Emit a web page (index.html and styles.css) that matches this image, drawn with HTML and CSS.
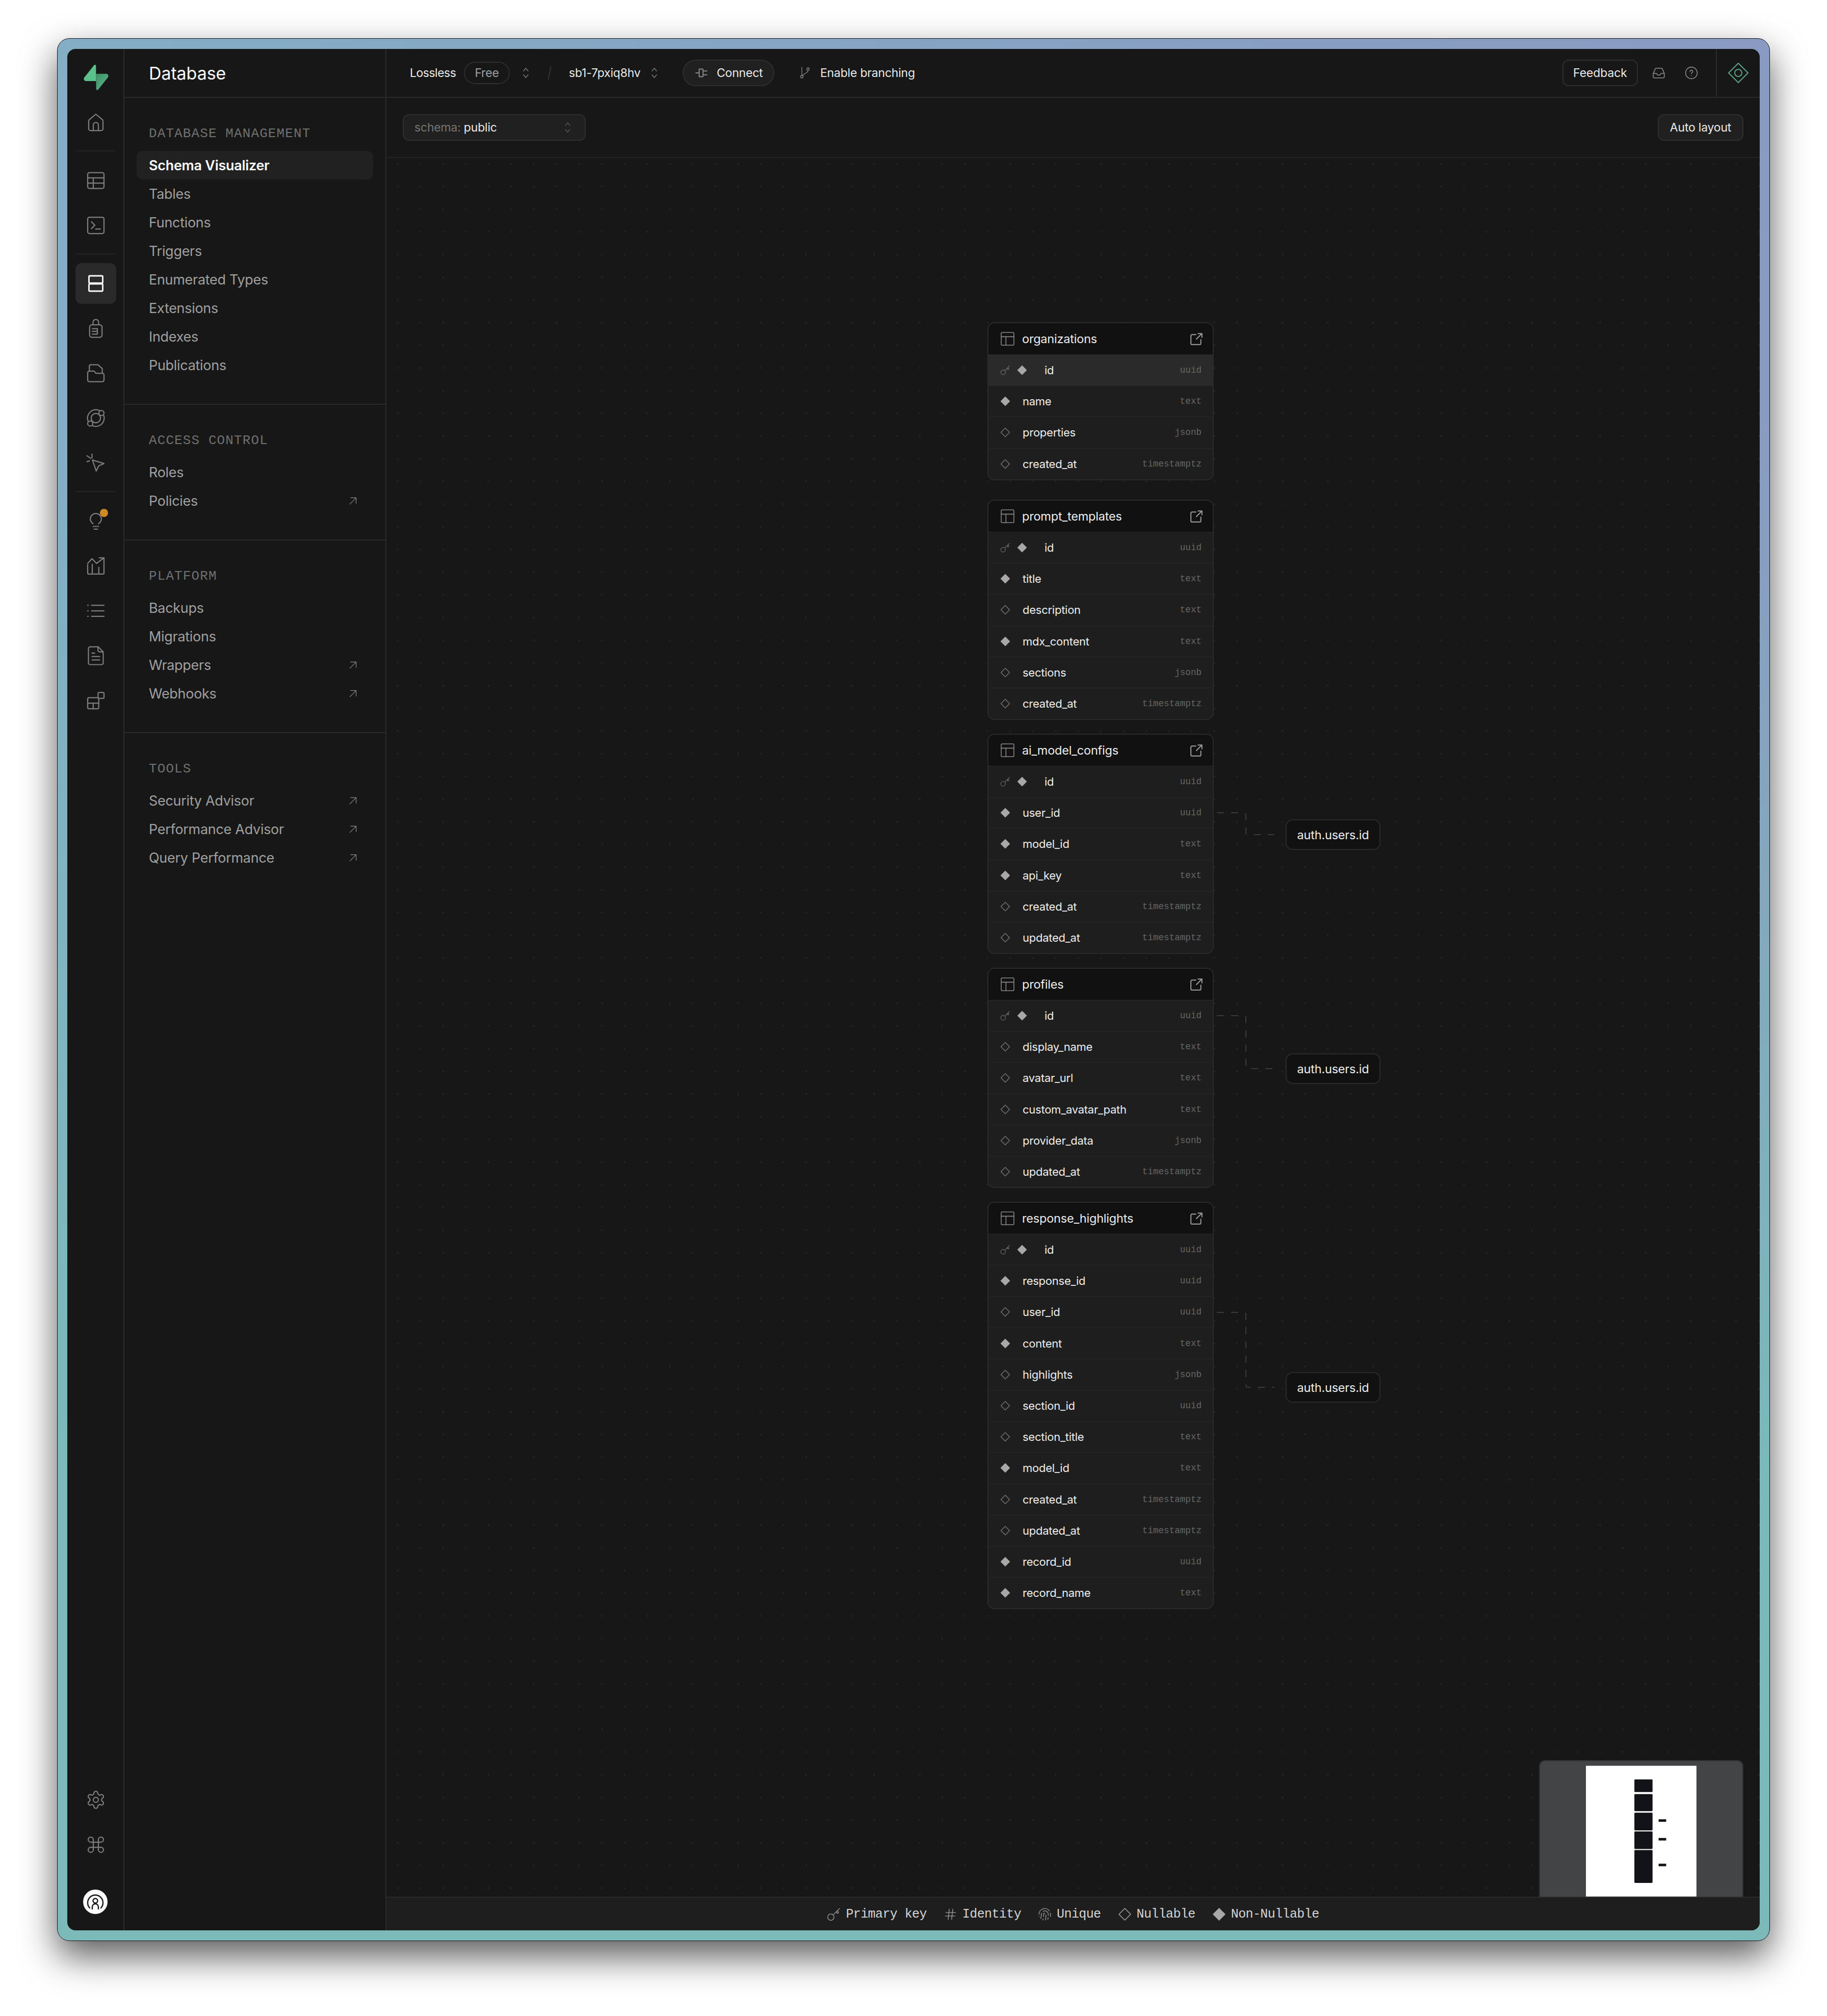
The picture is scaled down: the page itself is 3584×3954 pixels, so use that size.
FILE: index.html
```html
<html>

<head>
	<title>Schema Visualizer</title>
	<link rel="stylesheet" href="styles.css">
</head>

<body>
	<svg class="defs">
		<defs>
			<linearGradient id="logoFade" x1="0" y1="0" x2="1" y2="1">
				<stop offset="0" stop-color="#3f8a66" />
				<stop offset="1" stop-color="#5cc08c" />
			</linearGradient>
		</defs>
		<symbol id="i-home" viewBox="0 0 24 24"><path d="M3.6 10.500c0-.8.3-1.400.9-1.900L12 2.400l7.500 6.200c.6.500.9 1.100.9 1.900v9.100a2 2 0 0 1-2 2H5.600a2 2 0 0 1-2-2z M9 21.600v-6.600a3 3 0 0 1 6 0v6.600" /></symbol>
		<symbol id="i-table" viewBox="0 0 24 24"><rect x="2.400" y="2.700" width="19.200" height="18.600" rx="2" /><path d="M2.400 8.900h19.200 M2.400 15.100h19.200 M9 8.900v12.400" /></symbol>
		<symbol id="i-node-table" viewBox="0 0 26 26"><rect x="1" y="1" width="24" height="24" rx="2" /><path d="M1 9h24 M10 9v16" /></symbol>
		<symbol id="i-terminal" viewBox="0 0 24 24"><rect x="2.400" y="2.400" width="19.200" height="19.200" rx="2" /><path d="M6.800 7.800l4 4-4 4 M11.800 16.300h5.500" /></symbol>
		<symbol id="i-database" viewBox="0 0 24 24"><rect x="3.900" y="3" width="16.200" height="8.500" rx="1" /><rect x="3.900" y="12.500" width="16.200" height="8.500" rx="1" /></symbol>
		<symbol id="i-auth" viewBox="0 0 24 24"><rect x="4.700" y="7.800" width="14.600" height="14.700" rx="2.500" /><path d="M8.700 7.800V4.800a3.300 3.300 0 0 1 6.600 0v3 M7.800 12.300h6v6.500h-6 M7.800 15.500h6" /></symbol>
		<symbol id="i-storage" viewBox="0 0 24 24"><path d="M4.400 9V3.500a1.500 1.500 0 0 1 1.500-1.500h8.500l5.200 4.500V11 M2.400 11.500a2 2 0 0 1 2-2h5.600l2 2.500h7.600a2 2 0 0 1 2 2v6a2 2 0 0 1-2 2H4.400a2 2 0 0 1-2-2z" /></symbol>
		<symbol id="i-orbit" viewBox="0 0 24 24"><circle cx="12" cy="12" r="9.800" /><circle cx="12" cy="12" r="5.500" /><circle class="orbit-moon" cx="18.600" cy="6" r="3" /><circle class="orbit-moon" cx="5.400" cy="18.400" r="3" /></symbol>
		<symbol id="i-cursor" viewBox="0 0 24 24"><path d="M8 8.500l4.500 13 2.800-6 6.200-2.800z M1.500 3.500L6 6.500 M7.500 1.500V6 M1.500 10.500l3-1" /></symbol>
		<symbol id="i-bulb" viewBox="0 0 24 24"><path d="M8.700 15c-1.600-1.100-3.200-2.900-3.200-5.500a6.500 6.500 0 0 1 13 0c0 2.600-1.600 4.400-3.200 5.500 M8.800 18.300h6.400 M10 21.500h4" /></symbol>
		<symbol id="i-reports" viewBox="0 0 24 24"><path d="M2.400 10.500v10a1 1 0 0 0 1 1h17.200a1 1 0 0 0 1-1V3 M2.400 9l5.100-5.500 5.300 5.500 8.800-6.500 M16 2.400h5.600V8 M7.800 10v11.500 M15.500 13.500v8" /></symbol>
		<symbol id="i-logs" viewBox="0 0 24 24"><path d="M7 5.500h14.600 M7 12h14.600 M7 18.500h14.600 M2.400 5.500h.6 M2.400 12h.6 M2.400 18.500h.6" /></symbol>
		<symbol id="i-docs" viewBox="0 0 24 24"><path d="M3.300 3.500a2 2 0 0 1 2-2h9.400l6 6v13a2 2 0 0 1-2 2H5.300a2 2 0 0 1-2-2z M14.500 1.500v4a2 2 0 0 0 2 2h4.200 M7.500 9h3 M7.500 13h9 M7.500 17h9" /></symbol>
		<symbol id="i-blocks" viewBox="0 0 24 24"><rect x="2.400" y="8.600" width="13" height="13" rx="1.500" /><path d="M2.400 15.100h13 M8.900 15.100v6.500" /><rect x="14.600" y="2.400" width="7" height="7" rx="1.200" /></symbol>
		<symbol id="i-settings" viewBox="0 0 24 24"><path d="M12.220 2h-.44a2 2 0 0 0-2 2v.18a2 2 0 0 1-1 1.730l-.43.25a2 2 0 0 1-2 0l-.15-.08a2 2 0 0 0-2.730.73l-.22.38a2 2 0 0 0 .73 2.730l.15.1a2 2 0 0 1 1 1.720v.51a2 2 0 0 1-1 1.740l-.15.09a2 2 0 0 0-.73 2.730l.22.38a2 2 0 0 0 2.730.73l.15-.08a2 2 0 0 1 2 0l.43.25a2 2 0 0 1 1 1.730V20a2 2 0 0 0 2 2h.44a2 2 0 0 0 2-2v-.18a2 2 0 0 1 1-1.730l.43-.25a2 2 0 0 1 2 0l.15.08a2 2 0 0 0 2.730-.73l.22-.39a2 2 0 0 0-.73-2.730l-.15-.08a2 2 0 0 1-1-1.740v-.5a2 2 0 0 1 1-1.740l.15-.09a2 2 0 0 0 .73-2.730l-.22-.38a2 2 0 0 0-2.730-.73l-.15.08a2 2 0 0 1-2 0l-.43-.25a2 2 0 0 1-1-1.730V4a2 2 0 0 0-2-2z" /><circle cx="12" cy="12" r="3" /></symbol>
		<symbol id="i-command" viewBox="0 0 24 24"><path d="M15 6v12a3 3 0 1 0 3-3H6a3 3 0 1 0 3 3V6a3 3 0 1 0-3 3h12a3 3 0 1 0-3-3" /></symbol>
		<symbol id="i-arrow" viewBox="0 0 16 16"><path d="M1.500 14.500L14.500 1.500 M3 1.500h11.500V13" /></symbol>
		<symbol id="i-updown" viewBox="0 0 16 24"><path d="M3 8l5-6 5 6 M3 16l5 6 5-6" /></symbol>
		<symbol id="i-plug" viewBox="0 0 24 24"><path d="M1 12h6 M7 5h6a1 1 0 0 1 1 1v12a1 1 0 0 1-1 1H7z M14 8.500h7 M14 15.500h7" /></symbol>
		<symbol id="i-branch" viewBox="0 0 24 24"><circle cx="18" cy="4.500" r="2.500" /><circle cx="6" cy="19.500" r="2.500" /><path d="M6 1v16 M18 7c0 6-8 5-10.500 10.500" /></symbol>
		<symbol id="i-inbox" viewBox="0 0 24 24"><path d="M2 13l3.500-8a2 2 0 0 1 2-1.500h9a2 2 0 0 1 2 1.500l3.500 8v6a2 2 0 0 1-2 2H4a2 2 0 0 1-2-2z M2 13h6l2 3h4l2-3h6" /></symbol>
		<symbol id="i-help" viewBox="0 0 24 24"><circle cx="12" cy="12" r="10.500" /><path d="M9.500 9.500a2.500 2.500 0 1 1 3.800 2.200c-.8.500-1.300 1-1.300 2 M12 17.300h.01" /></symbol>
		<symbol id="i-open" viewBox="0 0 24 24"><path d="M11 4H4a2 2 0 0 0-2 2v14a2 2 0 0 0 2 2h14a2 2 0 0 0 2-2v-7 M12 12L22 2 M15 2h7v7" /></symbol>
		<symbol id="i-key" viewBox="0 0 24 24"><circle cx="7" cy="17" r="5.500" /><path d="M11 13L22 2 M16 8l2.500 2.500 2-2-2.500-2.500" /></symbol>
		<symbol id="i-hash" viewBox="0 0 24 24"><path d="M4 9h17 M3 15h17 M10 3L8 21 M16 3l-2 18" /></symbol>
		<symbol id="i-print" viewBox="0 0 24 24"><path d="M12 10a2 2 0 0 0-2 2c0 1.020-.1 2.510-.26 4 M14 13.120c0 2.380 0 6.380-1 8.880 M17.290 21.020c.12-.6.43-2.300.5-3.020 M2 12a10 10 0 0 1 18-6 M2 16h.01 M21.800 16c.2-2 .131-5.354 0-6 M5 19.500C5.500 18 6 15 6 12a6 6 0 0 1 .34-2 M8.650 22c.21-.66.45-1.320.57-2 M9 6.800a6 6 0 0 1 9 5.200v2" /></symbol>
		<symbol id="i-null" viewBox="0 0 20 20"><path d="M10 1.500L18.500 10 10 18.500 1.500 10z" /></symbol>
	</svg>

	<div class="frame">
		<div class="app">
			<nav class="rail">
				<a class="rail-btn">
					<svg class="logo" viewBox="0 0 109 113">
						<path d="M63.708 110.284C60.848 113.885 55.050 111.912 54.981 107.314L53.974 40.063L99.194 40.063C107.384 40.063 111.952 49.523 106.859 55.937L63.708 110.284Z" fill="url(#logoFade)" />
						<path d="M45.317 2.071C48.177 -1.530 53.975 .443 54.043 5.041L54.485 72.292H9.831C1.640 72.292 -2.928 62.832 2.166 56.418L45.317 2.071Z" fill="#5cc08c" />
					</svg>
				</a>
				<a class="rail-btn"><svg class="rail-icon"><use href="#i-home" /></svg></a>
				<div class="rail-sep"></div>
				<a class="rail-btn"><svg class="rail-icon"><use href="#i-table" /></svg></a>
				<a class="rail-btn"><svg class="rail-icon"><use href="#i-terminal" /></svg></a>
				<div class="rail-sep"></div>
				<a class="rail-btn active"><svg class="rail-icon"><use href="#i-database" /></svg></a>
				<a class="rail-btn"><svg class="rail-icon"><use href="#i-auth" /></svg></a>
				<a class="rail-btn"><svg class="rail-icon"><use href="#i-storage" /></svg></a>
				<a class="rail-btn"><svg class="rail-icon"><use href="#i-orbit" /></svg></a>
				<a class="rail-btn"><svg class="rail-icon"><use href="#i-cursor" /></svg></a>
				<div class="rail-sep"></div>
				<a class="rail-btn"><svg class="rail-icon"><use href="#i-bulb" /></svg><span class="badge"></span></a>
				<a class="rail-btn"><svg class="rail-icon"><use href="#i-reports" /></svg></a>
				<a class="rail-btn"><svg class="rail-icon"><use href="#i-logs" /></svg></a>
				<a class="rail-btn"><svg class="rail-icon"><use href="#i-docs" /></svg></a>
				<a class="rail-btn"><svg class="rail-icon"><use href="#i-blocks" /></svg></a>
				<a class="rail-btn rail-bottom"><svg class="rail-icon"><use href="#i-settings" /></svg></a>
				<a class="rail-btn"><svg class="rail-icon"><use href="#i-command" /></svg></a>
				<a class="rail-btn rail-user">
					<svg class="avatar" viewBox="0 0 48 48">
						<circle cx="24" cy="24" r="24" fill="#fafafa" />
						<path d="M13 36a15 15 0 1 1 22 0 M18 38v-4a6 6 0 0 1 12 0v4" fill="none" stroke="#161616" stroke-width="2.400" />
						<circle cx="24" cy="22" r="4.500" fill="none" stroke="#161616" stroke-width="2.400" />
					</svg>
				</a>
			</nav>

			<aside class="sidebar">
				<div class="sidebar-title">Database</div>
				<section class="menu">
					<h4>DATABASE MANAGEMENT</h4>
					<a class="menu-item current">Schema Visualizer</a>
					<a class="menu-item">Tables</a>
					<a class="menu-item">Functions</a>
					<a class="menu-item">Triggers</a>
					<a class="menu-item">Enumerated Types</a>
					<a class="menu-item">Extensions</a>
					<a class="menu-item">Indexes</a>
					<a class="menu-item">Publications</a>
				</section>
				<section class="menu">
					<h4>ACCESS CONTROL</h4>
					<a class="menu-item">Roles</a>
					<a class="menu-item">Policies<svg class="ext"><use href="#i-arrow" /></svg></a>
				</section>
				<section class="menu">
					<h4>PLATFORM</h4>
					<a class="menu-item">Backups</a>
					<a class="menu-item">Migrations</a>
					<a class="menu-item">Wrappers<svg class="ext"><use href="#i-arrow" /></svg></a>
					<a class="menu-item">Webhooks<svg class="ext"><use href="#i-arrow" /></svg></a>
				</section>
				<section class="menu last">
					<h4>TOOLS</h4>
					<a class="menu-item">Security Advisor<svg class="ext"><use href="#i-arrow" /></svg></a>
					<a class="menu-item">Performance Advisor<svg class="ext"><use href="#i-arrow" /></svg></a>
					<a class="menu-item">Query Performance<svg class="ext"><use href="#i-arrow" /></svg></a>
				</section>
			</aside>

			<main class="main">
				<header class="topbar">
					<span class="org">Lossless</span>
					<span class="plan">Free</span>
					<svg class="updown after-plan"><use href="#i-updown" /></svg>
					<span class="slash"></span>
					<span class="project">sb1-7pxiq8hv</span>
					<svg class="updown after-project"><use href="#i-updown" /></svg>
					<button class="connect"><svg class="connect-icon"><use href="#i-plug" /></svg>Connect</button>
					<span class="branching"><svg class="branch-icon"><use href="#i-branch" /></svg>Enable branching</span>
					<button class="feedback">Feedback</button>
					<svg class="top-icon inbox"><use href="#i-inbox" /></svg>
					<svg class="top-icon help"><use href="#i-help" /></svg>
					<div class="assistant">
						<svg class="assistant-icon" viewBox="0 0 40 40">
							<path d="M20 1L39 20 20 39 1 20z" />
							<circle cx="20" cy="20" r="7" />
						</svg>
					</div>
				</header>

				<div class="toolbar">
					<button class="schema-select"><span class="schema-key">schema:</span> public<svg class="updown"><use href="#i-updown" /></svg></button>
					<button class="auto-layout">Auto layout</button>
				</div>

				<div class="canvas">
					<svg class="edges">
						<path d="M1629 1284H1682q4 0 4 4V1323q0 4 4 4H1742" />
						<path d="M1629 1682H1682q4 0 4 4V1782q0 4 4 4H1742" />
						<path d="M1629 2264H1682q4 0 4 4V2407q0 4 4 4H1742" />
					</svg>

					<div class="node node-organizations">
						<div class="node-head"><svg class="head-icon"><use href="#i-node-table" /></svg>organizations<svg class="open-icon"><use href="#i-open" /></svg></div>
						<div class="row hover"><svg class="key"><use href="#i-key" /></svg><svg class="flag pk filled"><use href="#i-null" /></svg><span class="col pk-col">id</span><span class="type">uuid</span></div>
						<div class="row"><svg class="flag filled"><use href="#i-null" /></svg><span class="col">name</span><span class="type">text</span></div>
						<div class="row"><svg class="flag"><use href="#i-null" /></svg><span class="col">properties</span><span class="type">jsonb</span></div>
						<div class="row"><svg class="flag"><use href="#i-null" /></svg><span class="col">created_at</span><span class="type">timestamptz</span></div>
					</div>

					<div class="node node-prompts">
						<div class="node-head"><svg class="head-icon"><use href="#i-node-table" /></svg>prompt_templates<svg class="open-icon"><use href="#i-open" /></svg></div>
						<div class="row"><svg class="key"><use href="#i-key" /></svg><svg class="flag pk filled"><use href="#i-null" /></svg><span class="col pk-col">id</span><span class="type">uuid</span></div>
						<div class="row"><svg class="flag filled"><use href="#i-null" /></svg><span class="col">title</span><span class="type">text</span></div>
						<div class="row"><svg class="flag"><use href="#i-null" /></svg><span class="col">description</span><span class="type">text</span></div>
						<div class="row"><svg class="flag filled"><use href="#i-null" /></svg><span class="col">mdx_content</span><span class="type">text</span></div>
						<div class="row"><svg class="flag"><use href="#i-null" /></svg><span class="col">sections</span><span class="type">jsonb</span></div>
						<div class="row"><svg class="flag"><use href="#i-null" /></svg><span class="col">created_at</span><span class="type">timestamptz</span></div>
					</div>

					<div class="node node-models">
						<div class="node-head"><svg class="head-icon"><use href="#i-node-table" /></svg>ai_model_configs<svg class="open-icon"><use href="#i-open" /></svg></div>
						<div class="row"><svg class="key"><use href="#i-key" /></svg><svg class="flag pk filled"><use href="#i-null" /></svg><span class="col pk-col">id</span><span class="type">uuid</span></div>
						<div class="row"><svg class="flag filled"><use href="#i-null" /></svg><span class="col">user_id</span><span class="type">uuid</span></div>
						<div class="row"><svg class="flag filled"><use href="#i-null" /></svg><span class="col">model_id</span><span class="type">text</span></div>
						<div class="row"><svg class="flag filled"><use href="#i-null" /></svg><span class="col">api_key</span><span class="type">text</span></div>
						<div class="row"><svg class="flag"><use href="#i-null" /></svg><span class="col">created_at</span><span class="type">timestamptz</span></div>
						<div class="row"><svg class="flag"><use href="#i-null" /></svg><span class="col">updated_at</span><span class="type">timestamptz</span></div>
					</div>

					<div class="node node-profiles">
						<div class="node-head"><svg class="head-icon"><use href="#i-node-table" /></svg>profiles<svg class="open-icon"><use href="#i-open" /></svg></div>
						<div class="row"><svg class="key"><use href="#i-key" /></svg><svg class="flag pk filled"><use href="#i-null" /></svg><span class="col pk-col">id</span><span class="type">uuid</span></div>
						<div class="row"><svg class="flag"><use href="#i-null" /></svg><span class="col">display_name</span><span class="type">text</span></div>
						<div class="row"><svg class="flag"><use href="#i-null" /></svg><span class="col">avatar_url</span><span class="type">text</span></div>
						<div class="row"><svg class="flag"><use href="#i-null" /></svg><span class="col">custom_avatar_path</span><span class="type">text</span></div>
						<div class="row"><svg class="flag"><use href="#i-null" /></svg><span class="col">provider_data</span><span class="type">jsonb</span></div>
						<div class="row"><svg class="flag"><use href="#i-null" /></svg><span class="col">updated_at</span><span class="type">timestamptz</span></div>
					</div>

					<div class="node node-highlights">
						<div class="node-head"><svg class="head-icon"><use href="#i-node-table" /></svg>response_highlights<svg class="open-icon"><use href="#i-open" /></svg></div>
						<div class="row"><svg class="key"><use href="#i-key" /></svg><svg class="flag pk filled"><use href="#i-null" /></svg><span class="col pk-col">id</span><span class="type">uuid</span></div>
						<div class="row"><svg class="flag filled"><use href="#i-null" /></svg><span class="col">response_id</span><span class="type">uuid</span></div>
						<div class="row"><svg class="flag"><use href="#i-null" /></svg><span class="col">user_id</span><span class="type">uuid</span></div>
						<div class="row"><svg class="flag filled"><use href="#i-null" /></svg><span class="col">content</span><span class="type">text</span></div>
						<div class="row"><svg class="flag"><use href="#i-null" /></svg><span class="col">highlights</span><span class="type">jsonb</span></div>
						<div class="row"><svg class="flag"><use href="#i-null" /></svg><span class="col">section_id</span><span class="type">uuid</span></div>
						<div class="row"><svg class="flag"><use href="#i-null" /></svg><span class="col">section_title</span><span class="type">text</span></div>
						<div class="row"><svg class="flag filled"><use href="#i-null" /></svg><span class="col">model_id</span><span class="type">text</span></div>
						<div class="row"><svg class="flag"><use href="#i-null" /></svg><span class="col">created_at</span><span class="type">timestamptz</span></div>
						<div class="row"><svg class="flag"><use href="#i-null" /></svg><span class="col">updated_at</span><span class="type">timestamptz</span></div>
						<div class="row"><svg class="flag filled"><use href="#i-null" /></svg><span class="col">record_id</span><span class="type">uuid</span></div>
						<div class="row"><svg class="flag filled"><use href="#i-null" /></svg><span class="col">record_name</span><span class="type">text</span></div>
					</div>

					<div class="ref-node ref-models">auth.users.id</div>
					<div class="ref-node ref-profiles">auth.users.id</div>
					<div class="ref-node ref-highlights">auth.users.id</div>

					<svg class="minimap" viewBox="0 0 401 268">
						<rect x="91" y="9" width="219" height="259" fill="#fff" />
						<rect x="187" y="36" width="36" height="25" rx="1.500" />
						<rect x="187" y="65" width="36" height="34" rx="1.500" />
						<rect x="187" y="102" width="36" height="35" rx="1.500" />
						<rect x="187" y="139" width="36" height="35" rx="1.500" />
						<rect x="187" y="176" width="36" height="65" rx="1.500" />
						<rect x="235" y="115" width="15" height="5" />
						<rect x="235" y="152" width="15" height="5" />
						<rect x="235" y="203" width="15" height="5" />
					</svg>
				</div>

				<footer class="legend">
					<span class="legend-item"><svg class="legend-icon"><use href="#i-key" /></svg>Primary key</span>
					<span class="legend-item"><svg class="legend-icon"><use href="#i-hash" /></svg>Identity</span>
					<span class="legend-item"><svg class="legend-icon"><use href="#i-print" /></svg>Unique</span>
					<span class="legend-item"><svg class="legend-icon"><use href="#i-null" /></svg>Nullable</span>
					<span class="legend-item"><svg class="legend-icon filled"><use href="#i-null" /></svg>Non-Nullable</span>
				</footer>
			</main>
		</div>
	</div>
</body>

</html>
```

FILE: styles.css
```css
* {
	box-sizing: border-box;
	margin: 0;
	padding: 0;
}

html,
body {
	height: 3954px;
	background: #fff;
}

body {
	padding: 75px 112px 147px;
	font-family: "Inter", "Liberation Sans", sans-serif;
	overflow: hidden;
}

button {
	font-family: inherit;
	color: inherit;
}

svg {
	display: block;
	flex: none;
	fill: none;
	stroke: currentColor;
	stroke-linecap: round;
	stroke-linejoin: round;
}

.defs {
	position: absolute;
	width: 0;
	height: 0;
}

.frame {
	height: 100%;
	padding: 20px 19px;
	border: 1px solid #111;
	border-radius: 24px;
	background: linear-gradient(180deg, rgba(123, 184, 186, 0) 20%, #7cb9b9 75%), linear-gradient(90deg, #84aec6 0%, #86a4c4 45%, #8a9ac2 100%);
	box-shadow: 0 30px 70px rgba(0, 0, 0, .65);
}

.app {
	display: flex;
	height: 100%;
	border-radius: 16px;
	overflow: hidden;
	background: #171717;
}

/* icon rail */
.rail {
	display: flex;
	flex-direction: column;
	gap: 8px;
	width: 112px;
	flex: none;
	padding: 16px;
	border-right: 2px solid #2a2a2a;
	color: #7d7d7d;
}

.rail-btn {
	position: relative;
	display: flex;
	align-items: center;
	justify-content: center;
	width: 80px;
	height: 80px;
	flex: none;
	border-radius: 12px;
}

.rail-btn.active {
	background: #2a2a2a;
	color: #fafafa;
}

.rail-btn.active .rail-icon {
	stroke-width: 1.700;
}

.rail-sep {
	height: 2px;
	margin: 7px 0 9px;
	background: #242424;
}

.rail-bottom {
	margin-top: auto;
}

.rail-user {
	margin-top: 24px;
	padding-right: 3px;
}

.rail-icon {
	width: 40px;
	height: 40px;
	stroke-width: 1.350;
}

.orbit-moon {
	fill: #171717;
}

.logo {
	width: 49px;
	height: 50px;
	stroke: none;
}

.avatar {
	width: 48px;
	height: 48px;
	stroke: none;
}

.badge {
	position: absolute;
	left: 48px;
	top: 16px;
	width: 16px;
	height: 16px;
	border-radius: 50%;
	background: #d08a25;
}

/* sidebar */
.sidebar {
	width: 514px;
	flex: none;
	border-right: 2px solid #2a2a2a;
}

.sidebar-title {
	display: flex;
	align-items: center;
	height: 96px;
	padding-left: 48px;
	border-bottom: 2px solid #2a2a2a;
	color: #fafafa;
	font-size: 34px;
	letter-spacing: -.1px;
}

.menu {
	display: flex;
	flex-direction: column;
	padding: 48px 24px;
	border-bottom: 2px solid #2a2a2a;
}

.menu.last {
	border-bottom: 0;
}

.menu h4 {
	height: 40px;
	margin-bottom: 16px;
	padding-left: 24px;
	color: #707070;
	font-family: "Liberation Mono", monospace;
	font-size: 26px;
	font-weight: 400;
	line-height: 44px;
	letter-spacing: 1.100px;
}

.menu-item {
	display: flex;
	align-items: center;
	justify-content: space-between;
	height: 56px;
	padding: 0 32px 0 24px;
	border-radius: 12px;
	color: #a0a0a0;
	font-size: 27px;
	letter-spacing: -.3px;
}

.menu-item.current {
	background: #212121;
	color: #fafafa;
	font-weight: 600;
}

.ext {
	width: 15px;
	height: 15px;
	color: #8a8a8a;
	stroke-width: 1.300;
}

/* main column */
.main {
	display: flex;
	flex-direction: column;
	flex: 1;
	min-width: 0;
}

.topbar {
	display: flex;
	align-items: center;
	height: 96px;
	flex: none;
	padding-left: 46px;
	border-bottom: 2px solid #2a2a2a;
	color: #eaeaea;
	font-size: 23px;
	letter-spacing: -.2px;
}

.org {
	width: 88px;
	letter-spacing: -.5px;
}

.plan {
	display: flex;
	align-items: center;
	justify-content: center;
	width: 90px;
	height: 44px;
	margin-left: 18px;
	border: 2px solid #2e2e2e;
	border-radius: 22px;
	color: #a0a0a0;
}

.updown {
	width: 15px;
	height: 22px;
	color: #8a8a8a;
	stroke-width: 1.500;
}

.after-plan {
	margin-left: 24px;
}

.slash {
	width: 2px;
	height: 26px;
	margin-left: 38px;
	background: #333;
	transform: rotate(12deg);
}

.project {
	width: 136px;
	margin-left: 37px;
	white-space: nowrap;
}

.after-project {
	margin-left: 24px;
}

.connect {
	display: flex;
	align-items: center;
	gap: 16px;
	width: 180px;
	height: 52px;
	margin-left: 48px;
	padding-left: 23px;
	border: 2px solid #2e2e2e;
	border-radius: 26px;
	background: #202020;
	font-size: 23px;
	letter-spacing: -.2px;
}

.connect-icon {
	width: 26px;
	height: 26px;
	color: #8a8a8a;
	stroke-width: 1.800;
}

.branching {
	display: flex;
	align-items: center;
	gap: 18px;
	margin-left: 48px;
}

.branch-icon {
	width: 24px;
	height: 24px;
	color: #8a8a8a;
	stroke-width: 1.300;
}

.feedback {
	width: 148px;
	height: 52px;
	margin-left: auto;
	border: 2px solid #2e2e2e;
	border-radius: 12px;
	background: none;
	font-size: 23px;
	letter-spacing: -.1px;
}

.top-icon {
	width: 26px;
	height: 26px;
	color: #8f8f8f;
	stroke-width: 1.400;
}

.inbox {
	margin-left: 28px;
}

.help {
	margin-left: 38px;
}

.assistant {
	display: flex;
	align-items: center;
	justify-content: center;
	width: 86px;
	height: 100%;
	margin-left: 35px;
	border-left: 2px solid #2a2a2a;
}

.assistant-icon {
	width: 40px;
	height: 40px;
	color: #5aa587;
	stroke-width: 2;
}

.toolbar {
	display: flex;
	align-items: center;
	justify-content: space-between;
	height: 118px;
	flex: none;
	padding: 0 32px;
	border-bottom: 2px solid #242424;
	font-size: 23px;
	letter-spacing: -.2px;
}

.schema-select {
	display: flex;
	align-items: center;
	width: 359px;
	height: 52px;
	padding: 0 26px 0 21px;
	border: 2px solid #2e2e2e;
	border-radius: 12px;
	background: #202020;
	color: #eaeaea;
	font-size: 23px;
	letter-spacing: -.2px;
	white-space: pre;
}

.schema-key {
	color: #757575;
}

.schema-select .updown {
	margin-left: auto;
	color: #5c5c5c;
}

.auto-layout {
	width: 168px;
	height: 52px;
	border: 2px solid #2e2e2e;
	border-radius: 12px;
	background: #202020;
	color: #eaeaea;
	font-size: 23px;
	letter-spacing: -.2px;
}

/* diagram */
.canvas {
	position: relative;
	flex: 1;
	background-image: radial-gradient(circle, #262626 1.500px, transparent 2px);
	background-size: 44.500px 44.500px;
	background-position: 0 -11px;
}

.edges {
	position: absolute;
	inset: 0;
	width: 100%;
	height: 100%;
	color: #3a3a3a;
	stroke-width: 2;
	stroke-linecap: butt;
	stroke-dasharray: 14 14;
}

.node {
	position: absolute;
	left: 1179px;
	width: 444px;
	border: 2px solid #2a2a2a;
	border-radius: 14px;
	overflow: hidden;
	background: #1e1e1e;
	color: #ededed;
}

.node-organizations {
	top: 322px;
}

.node-prompts {
	top: 670px;
}

.node-models {
	top: 1129px;
}

.node-profiles {
	top: 1588px;
}

.node-highlights {
	top: 2047px;
}

.node-head {
	display: flex;
	align-items: center;
	height: 61px;
	padding: 0 19px 0 24px;
	background: #111;
	font-size: 23.500px;
	letter-spacing: -.2px;
}

.head-icon {
	width: 27px;
	height: 27px;
	margin-right: 15px;
	color: #8a8a8a;
	stroke-width: 1.500;
}

.open-icon {
	width: 26px;
	height: 26px;
	margin-left: auto;
	color: #a0a0a0;
	stroke-width: 1.800;
}

.row {
	display: flex;
	align-items: center;
	height: 61.200px;
	padding: 0 22px 0 23px;
	border-top: 1px solid #282828;
	font-size: 22px;
	letter-spacing: -.25px;
}

.row.hover {
	background: #2a2a2a;
}

.key {
	width: 20px;
	height: 20px;
	color: #777;
	stroke-width: 1.300;
}

.flag {
	width: 20px;
	height: 20px;
	color: #777;
	stroke-width: 1.300;
}

.flag.filled,
.legend-icon.filled {
	color: #a8a8a8;
	fill: #a8a8a8;
}

.flag.pk {
	margin-left: 13px;
}

.col {
	margin-left: 24px;
}

.col.pk-col {
	margin-left: 34px;
}

.type {
	margin-left: auto;
	color: #666;
	font-family: "Liberation Mono", monospace;
	font-size: 17.600px;
	letter-spacing: 0;
}

.ref-node {
	position: absolute;
	left: 1764px;
	display: flex;
	align-items: center;
	justify-content: center;
	width: 186px;
	height: 60px;
	border: 2px solid #2a2a2a;
	border-radius: 14px;
	background: #111;
	color: #ededed;
	font-size: 23.500px;
	letter-spacing: -.2px;
}

.ref-models {
	top: 1297px;
}

.ref-profiles {
	top: 1756px;
}

.ref-highlights {
	top: 2381px;
}

.minimap {
	position: absolute;
	right: 32px;
	bottom: 0;
	width: 401px;
	height: 268px;
	border: 2px solid #303030;
	border-bottom: 0;
	border-radius: 12px 12px 0 0;
	background: #434446;
	fill: #111318;
	stroke: none;
}

.legend {
	display: flex;
	align-items: center;
	justify-content: center;
	gap: 33px;
	height: 66px;
	flex: none;
	border-top: 2px solid #2a2a2a;
	background: #1e1e1e;
	color: #d4d4d4;
	font-family: "Liberation Mono", monospace;
	font-size: 25px;
	letter-spacing: -.6px;
}

.legend-item {
	display: flex;
	align-items: center;
	gap: 10px;
}

.legend-icon {
	width: 27px;
	height: 27px;
	color: #a0a0a0;
	stroke-width: 1.200;
}
```
